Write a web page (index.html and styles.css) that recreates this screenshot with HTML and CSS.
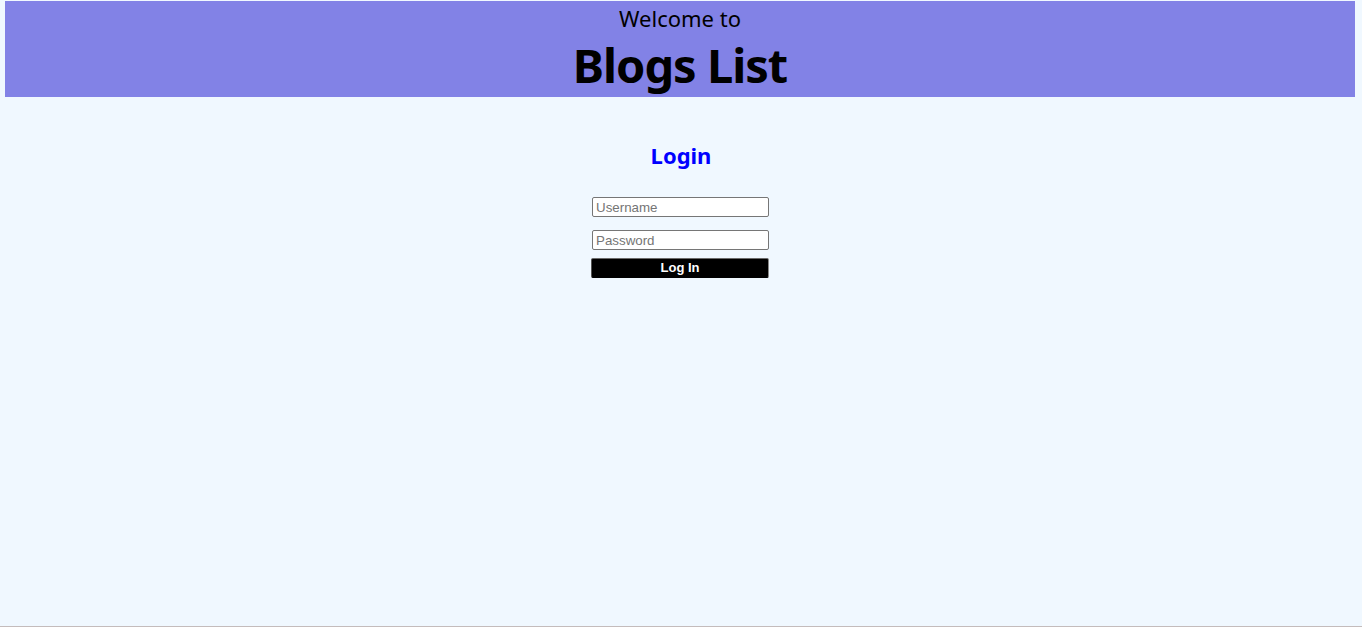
FILE: index.html
```html
<!DOCTYPE html>
<html>
<head>
<meta charset="utf-8">
<title>Blogs List</title>
<link rel="stylesheet" href="styles.css">
</head>
<body>
<div class="page">
  <header class="banner">
    <p class="welcome">Welcome to</p>
    <h1 class="title">Blogs List</h1>
  </header>
  <main class="login">
    <h2 class="login-title">Login</h2>
    <form class="login-form">
      <input class="field" type="text" placeholder="Username">
      <input class="field field-pass" type="password" placeholder="Password">
      <button class="submit" type="button">Log In</button>
    </form>
  </main>
</div>
</body>
</html>
```
FILE: styles.css
```css
html, body {
  margin: 0;
  padding: 0;
  background: #f0f8ff;
}
.page {
  box-sizing: border-box;
  min-height: 627px;
  border-bottom: 1px solid #c4bcbc;
  padding-top: 1px;
  font-family: "Noto Sans", "Open Sans", sans-serif;
}
.banner {
  margin: 0 7px 0 5px;
  height: 96px;
  background: #8282e6;
  text-align: center;
  color: #000;
  display: flex;
  flex-direction: column;
  align-items: center;
}
.welcome {
  margin: 0;
  padding-top: 2px;
  font-size: 22px;
  line-height: 30px;
  font-weight: 400;
}
.title {
  margin: 3px 0 0;
  font-size: 47px;
  line-height: 58px;
  font-weight: 700;
  letter-spacing: -1px;
}
.login {
  display: flex;
  flex-direction: column;
  align-items: center;
}
.login-title {
  margin: 42px 0 0;
  color: #0000ff;
  font-size: 22px;
  line-height: 32px;
  font-weight: 700;
}
.login-form {
  margin-top: 26px;
  display: flex;
  flex-direction: column;
  align-items: center;
}
.field {
  box-sizing: border-box;
  width: 177px;
  height: 20px;
  margin: 0 1px 0 0;
  padding: 1px 3px;
  border: 1px solid #767676;
  border-radius: 2px;
  background: #fff;
  font-family: "Liberation Sans", Arial, sans-serif;
  font-size: 13.33px;
  color: #000;
}
.field::placeholder {
  color: #757575;
}
.field-pass {
  margin-top: 13px;
}
.submit {
  box-sizing: border-box;
  width: 178px;
  height: 20px;
  margin: 8px 2px 0 0;
  padding: 0;
  background: #000;
  color: #fff;
  border: 1px solid #000;
  border-top-color: #6a6a6a;
  border-left-color: #555;
  border-right-color: #888;
  border-radius: 2px;
  font-family: "Liberation Sans", Arial, sans-serif;
  font-size: 13px;
  font-weight: 700;
  line-height: 18px;
}
```
